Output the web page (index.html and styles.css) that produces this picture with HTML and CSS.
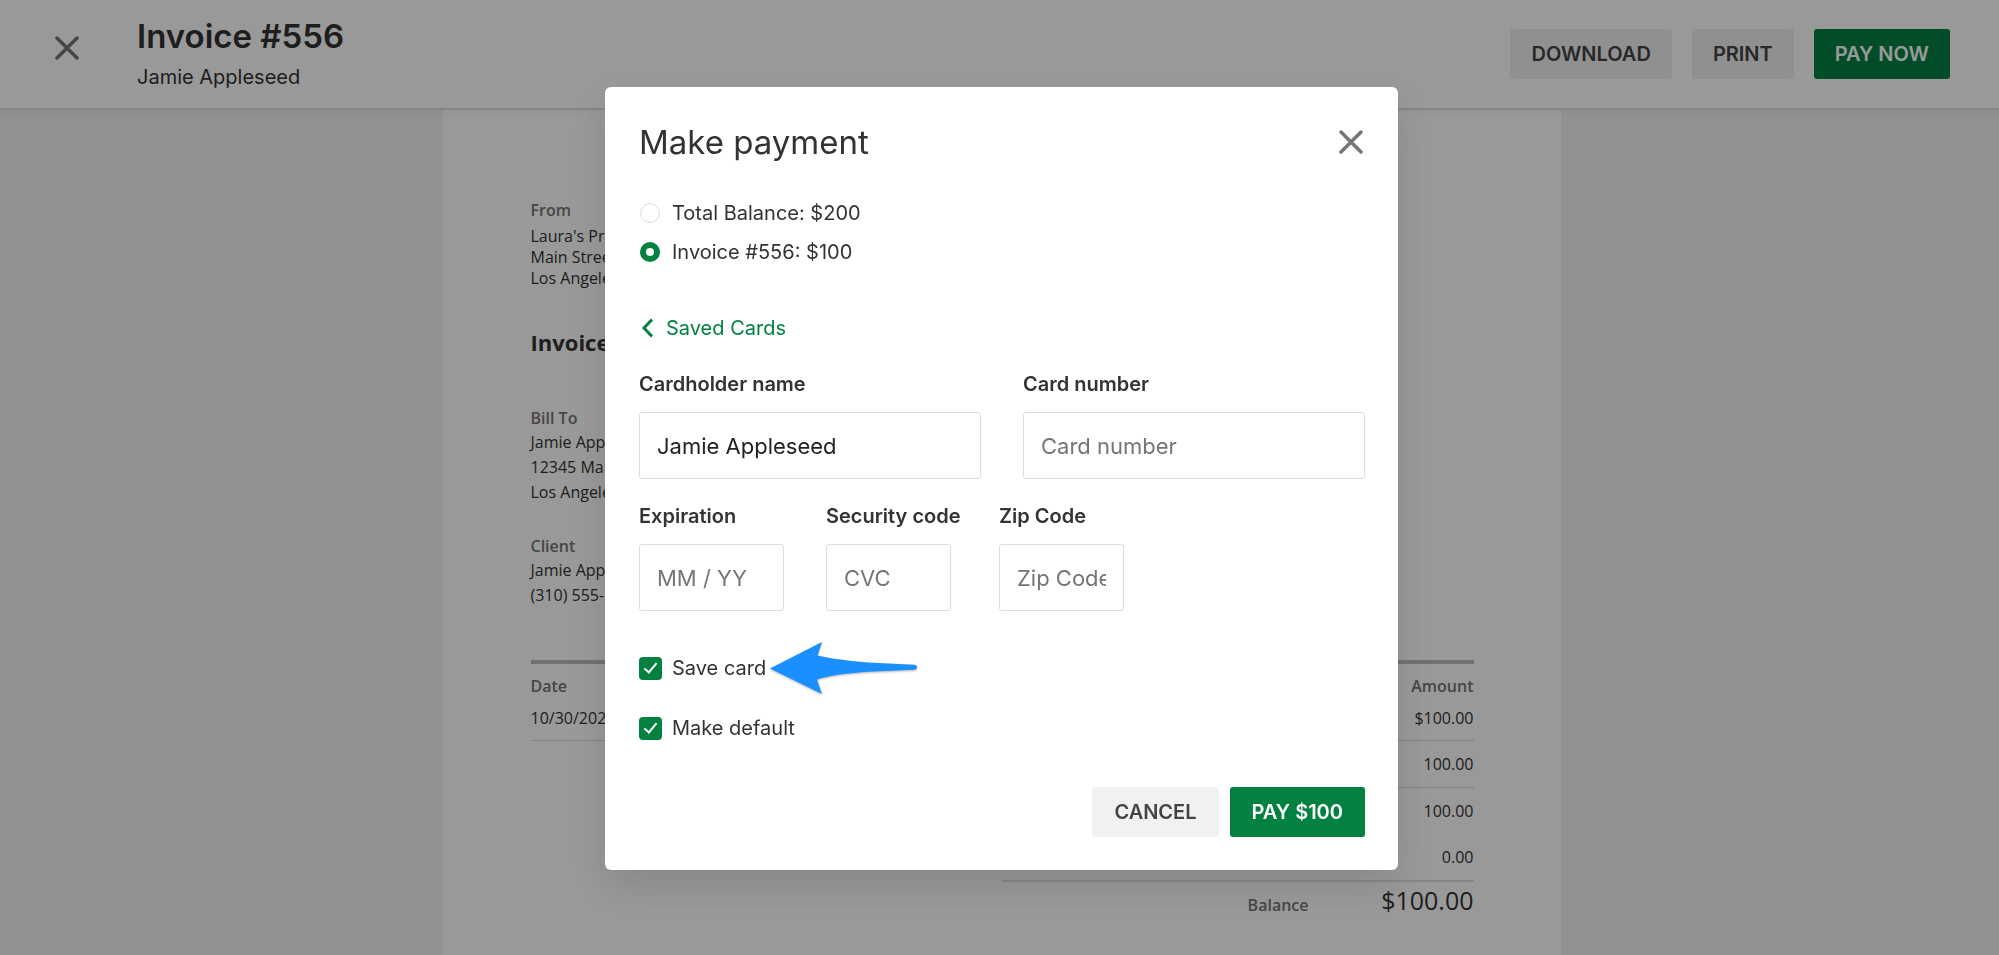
FILE: index.html
```html
<!DOCTYPE html>
<html lang="en">
<head>
<meta charset="utf-8">
<title>Invoice #556</title>
<link rel="stylesheet" href="styles.css">
</head>
<body>
<header class="topbar">
  <button class="icon-btn" type="button" aria-label="Close invoice">
    <svg width="24" height="24" viewBox="0 0 24 24"><path d="M2 2 22 22M22 2 2 22"/></svg>
  </button>
  <div class="topbar-text">
    <h1 class="topbar-title">Invoice #556</h1>
    <p class="topbar-client">Jamie Appleseed</p>
  </div>
  <div class="topbar-actions">
    <button class="btn" type="button">DOWNLOAD</button>
    <button class="btn" type="button">PRINT</button>
    <button class="btn btn-primary" type="button">PAY NOW</button>
  </div>
</header>
<main class="page">
  <article class="paper">
    <section class="sender">
      <h3 class="doc-label">From</h3>
      <p>Laura's Productions</p>
      <p>Main Street</p>
      <p>Los Angeles</p>
    </section>
    <h2 class="doc-title">Invoice</h2>
    <section class="party">
      <h3 class="doc-label">Bill To</h3>
      <p>Jamie Appleseed</p>
      <p>12345 Main Street</p>
      <p>Los Angeles</p>
    </section>
    <section class="party">
      <h3 class="doc-label">Client</h3>
      <p>Jamie Appleseed</p>
      <p>(310) 555-</p>
    </section>
    <table class="items">
      <thead><tr><th>Date</th><th class="num">Amount</th></tr></thead>
      <tbody><tr><td>10/30/2022</td><td class="num">$100.00</td></tr></tbody>
    </table>
    <div class="totals">
      <div class="total-row ruled"><span class="sum">100.00</span></div>
      <div class="total-row"><span class="sum">100.00</span></div>
      <div class="total-row ruled-thick"><span class="sum">0.00</span></div>
      <div class="total-row balance"><span class="doc-label">Balance</span><span class="sum">$100.00</span></div>
    </div>
  </article>
</main>
<div class="overlay">
  <form class="modal" role="dialog" aria-labelledby="modal-title">
    <div class="modal-head">
      <h2 class="modal-title" id="modal-title">Make payment</h2>
      <button class="icon-btn" type="button" aria-label="Close">
        <svg width="24" height="24" viewBox="0 0 24 24"><path d="M2 2 22 22M22 2 2 22"/></svg>
      </button>
    </div>
    <div class="amounts">
      <label class="choice"><input class="radio" type="radio" name="amount">Total Balance: $200</label>
      <label class="choice"><input class="radio" type="radio" name="amount" checked>Invoice #556: $100</label>
    </div>
    <a class="back" href="#">
      <svg width="14" height="20" viewBox="0 0 14 20"><path d="M13 1.500 5 10l8 8.500"/></svg>
      Saved Cards
    </a>
    <div class="fields fields-half">
      <div class="field"><label for="holder">Cardholder name</label><input class="text" id="holder" type="text" value="Jamie Appleseed"></div>
      <div class="field"><label for="number">Card number</label><input class="text" id="number" type="text" placeholder="Card number"></div>
    </div>
    <div class="fields">
      <div class="field"><label for="exp">Expiration</label><input class="text exp" id="exp" type="text" placeholder="MM / YY"></div>
      <div class="field field-code"><label for="cvc">Security code</label><input class="text short" id="cvc" type="text" placeholder="CVC"></div>
      <div class="field"><label for="zip">Zip Code</label><input class="text short" id="zip" type="text" placeholder="Zip Code"></div>
    </div>
    <div class="options">
      <div class="option">
        <label class="choice"><input class="check" type="checkbox" checked>Save card</label>
        <svg class="arrow" width="152" height="60" viewBox="0 0 152 60"><path d="M2 30.500 54 4 49.500 17.500C62 20.500 75 22.300 100 24.500L146 26.700Q149 27 149 29.200 149 31.600 146 31.700L100 33.800C75 35.500 62 37.700 49 41.500L54 56Z"/></svg>
      </div>
      <div class="option">
        <label class="choice"><input class="check" type="checkbox" checked>Make default</label>
      </div>
    </div>
    <div class="modal-actions">
      <button class="btn" type="button">CANCEL</button>
      <button class="btn btn-primary" type="submit">PAY $100</button>
    </div>
  </form>
</div>
</body>
</html>
```

FILE: styles.css
```css
*, *::before, *::after { box-sizing: border-box; }
body, h1, h2, h3, p { margin: 0; }
body {
  min-height: 100vh;
  display: flex;
  flex-direction: column;
  background: #f0f3f6;
  color: #333;
  font-family: Inter, "Liberation Sans", sans-serif;
  font-size: 20px;
  line-height: 24px;
}
button, input { font: inherit; color: inherit; }

.topbar {
  display: flex;
  align-items: flex-start;
  min-height: 110px;
  padding: 15px 49px 0 55px;
  background: #fff;
  border-bottom: 2px solid #dde1e5;
  box-shadow: 0 2px 8px rgba(0, 0, 0, 0.05);
  position: relative;
}
.icon-btn {
  display: flex;
  padding: 0;
  border: 0;
  background: none;
  cursor: pointer;
}
.icon-btn path {
  fill: none;
  stroke: #757575;
  stroke-width: 3.5;
  stroke-linecap: round;
}
.topbar .icon-btn { margin-top: 21px; }
.topbar-text { flex: 1; margin-left: 58px; }
.topbar-title {
  font-size: 33px;
  line-height: 42px;
  font-weight: 600;
}
.topbar-client { margin-top: 8px; }
.topbar-actions { display: flex; gap: 20px; margin-top: 14px; }

.btn {
  height: 50px;
  padding: 0 21px;
  border: 0;
  border-radius: 3px;
  background: #f1f1f1;
  color: #444;
  font-weight: 600;
  cursor: pointer;
}
.btn-primary { background: #038141; color: #fff; }

.page {
  flex: 1;
  display: flex;
  justify-content: center;
  padding-left: 4px;
  height: 0;
  overflow: hidden;
}
.paper {
  width: 100%;
  max-width: 1118px;
  padding: 88px 87px 0 88px;
  background: #fff;
  font-family: "Open Sans", "Noto Sans", sans-serif;
  font-size: 16px;
}
.doc-label {
  font-size: 16px;
  line-height: 24px;
  font-weight: 600;
  color: #757575;
}
.sender .doc-label { margin-bottom: 4px; }
.sender p { line-height: 21px; }
.doc-title {
  margin: 37px 0 48px;
  font-size: 22px;
  line-height: 32px;
  font-weight: 700;
}
.party p { line-height: 25px; }
.party + .party { margin-top: 29px; }

.items {
  width: 100%;
  margin-top: 52px;
  border-spacing: 0;
  border-top: 4px solid #bdbdbd;
  border-bottom: 1px solid #d8d8d8;
}
.items th {
  padding: 10px 0 0;
  text-align: left;
  font-weight: 600;
  color: #757575;
}
.items td { padding: 8px 0 10px; }
.items .num { text-align: right; }

.totals { width: 50%; margin-left: auto; }
.total-row {
  display: flex;
  align-items: flex-end;
  justify-content: flex-end;
  padding: 11px 0;
}
.sum { width: 165px; text-align: right; }
.ruled { border-bottom: 1px solid #d8d8d8; }
.ruled-thick { border-bottom: 2px solid #e0e0e0; }
.balance { padding: 1px 0; }
.balance .sum { font-size: 25px; line-height: 34px; }

.overlay {
  position: fixed;
  inset: 0;
  display: flex;
  align-items: flex-start;
  justify-content: center;
  padding: 87px 0 0 4px;
  background: rgba(0, 0, 0, 0.4);
}
.modal {
  width: 100%;
  max-width: 793px;
  padding: 35px 33px 33px 34px;
  border-radius: 6px;
  background: #fff;
  box-shadow: 0 16px 40px rgba(0, 0, 0, 0.12);
}
.modal-head {
  display: flex;
  align-items: center;
  justify-content: space-between;
  padding-right: 2px;
}
.modal-title {
  font-size: 33px;
  line-height: 40px;
  font-weight: 400;
}
.amounts {
  display: flex;
  flex-direction: column;
  gap: 15px;
  margin-top: 39px;
}
.choice { display: flex; align-items: center; }
.radio, .check {
  appearance: none;
  flex: none;
  margin: 0;
}
.radio {
  width: 20px;
  height: 20px;
  margin: 0 12px 0 1px;
  border: 1px solid #ddd;
  border-radius: 50%;
}
.radio:checked { border: 6px solid #038141; }
.check {
  width: 23px;
  height: 23px;
  margin-right: 10px;
  border-radius: 4px;
  background: #038141;
  display: grid;
  place-items: center;
}
.check::before {
  content: "";
  width: 7px;
  height: 13px;
  margin-bottom: 3px;
  border: solid #fff;
  border-width: 0 2px 2px 0;
  transform: rotate(40deg);
}
.back {
  display: flex;
  align-items: center;
  width: max-content;
  gap: 13px;
  margin-top: 52px;
  color: #038141;
  text-decoration: none;
}
.back path { fill: none; stroke: currentColor; stroke-width: 3; }

.fields { display: flex; gap: 42px; margin-top: 25px; }
.fields-half { margin-top: 32px; }
.fields-half .field { flex: 1; }
.field {
  display: flex;
  flex-direction: column;
  align-items: flex-start;
  gap: 16px;
}
.field label { font-weight: 600; white-space: nowrap; }
.field-code { width: 131px; }
.text {
  width: 100%;
  height: 67px;
  padding: 0 17px;
  border: 1px solid #ddd;
  border-radius: 3px;
  background: #fff;
  font-size: 22px;
  color: #222;
}
.text::placeholder { color: #757575; opacity: 1; }
.exp { width: 145px; }
.short { width: 125px; }

.options {
  display: flex;
  flex-direction: column;
  gap: 36px;
  margin-top: 45px;
}
.option { display: flex; align-items: center; height: 24px; }
.arrow {
  margin-left: 2px;
  fill: #1a8fff;
  filter: drop-shadow(0 1px 1px rgba(0, 0, 0, 0.3));
}
.modal-actions {
  display: flex;
  justify-content: flex-end;
  gap: 11px;
  margin-top: 47px;
}
.modal-actions .btn { padding: 0 22px; }
```
